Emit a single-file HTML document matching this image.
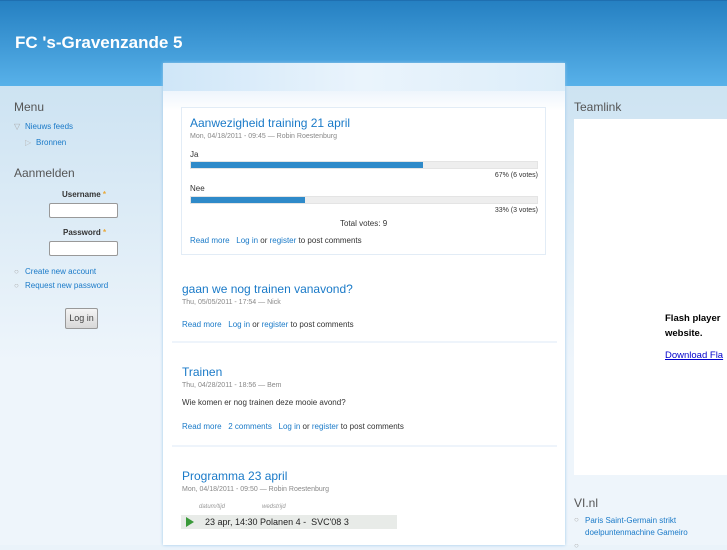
<!DOCTYPE html>
<html><head><meta charset="utf-8"><style>
*{margin:0;padding:0;box-sizing:border-box}
body{width:727px;height:545px;overflow:hidden;font-family:"Liberation Sans",sans-serif;background:#eaf3fa;position:relative;font-size:8px;color:#333}
a{color:#1a7ac8;text-decoration:none}
#hdr{position:absolute;left:0;top:0;width:727px;height:86px;background:linear-gradient(#2580c2,#58b1e9);border-top:1px solid #1f6fb0}
#hdr h1{position:absolute;left:15px;top:32px;color:#fff;font-size:17px;font-weight:bold}
.side{position:absolute;top:86px;height:459px;background:linear-gradient(#cde3f2,#eef5fb 60%,#eef5fb)}
#left{left:0;width:163px}
#right{left:565px;width:162px}
#center{position:absolute;left:163px;top:63px;width:402px;height:482px;background:#fff;box-shadow:0 0 3px #9cc8ea}
#center .top{height:28px;background:linear-gradient(90deg,#cfe6f8,#eaf4fc 50%,#dcedf9)}
#center .top2{height:20px;background:linear-gradient(#eef5fc,#fff)}
h2{font-weight:normal;font-size:12px;color:#555}
.t{position:absolute;font-size:8px;white-space:nowrap}
.post h3{font-weight:normal;font-size:12px;color:#1a7ac8}
.meta{color:#888;font-size:7px}
.bar{position:absolute;left:190px;width:348px;height:8px;background:#eee;border:1px solid #e4e4e4}
.bar div{height:6px;background:#2f8ac9}
input{position:absolute;width:69px;height:15px;border:1px solid #999;border-radius:2px;background:#fff}
</style></head><body>
<div id="hdr"><h1>FC 's-Gravenzande 5</h1></div>
<div class="side" id="left"></div>
<div class="side" id="right"></div>
<div id="center"><div class="top"></div><div class="top2"></div></div>

<h2 style="position:absolute;left:14px;top:100px">Menu</h2>
<div class="t" style="left:14px;top:122px;color:#aaa">▽</div>
<a class="t" style="left:25px;top:122px">Nieuws feeds</a>
<div class="t" style="left:25px;top:138px;color:#bbb">▷</div>
<a class="t" style="left:36px;top:138px">Bronnen</a>
<h2 style="position:absolute;left:14px;top:166px">Aanmelden</h2>
<div class="t" style="left:62px;top:190px;font-weight:bold">Username <span style="color:#e9a93b">*</span></div>
<input style="left:49px;top:203px">
<div class="t" style="left:63px;top:228px;font-weight:bold">Password <span style="color:#e9a93b">*</span></div>
<input style="left:49px;top:241px">
<div class="t" style="left:14px;top:267px;color:#aaa">○</div>
<a class="t" style="left:25px;top:267px">Create new account</a>
<div class="t" style="left:14px;top:281px;color:#aaa">○</div>
<a class="t" style="left:25px;top:281px">Request new password</a>
<div style="position:absolute;left:65px;top:308px;width:33px;height:21px;border:1px solid #999;border-radius:2px;background:linear-gradient(#f4f4f4,#d8d8d8);font-size:9px;color:#444;text-align:center;line-height:19px">Log in</div>

<div style="position:absolute;left:181px;top:107px;width:365px;height:148px;background:#fff;border:1px solid #e2ecf6"></div>
<div class="post" style="position:absolute;left:190px;top:116px;width:348px">
<h3>Aanwezigheid training 21 april</h3>
</div>
<div class="t meta" style="left:190px;top:133px">Mon, 04/18/2011 - 09:45 — Robin Roestenburg</div>
<div class="t" style="left:190px;top:150px">Ja</div>
<div class="bar" style="top:161px"><div style="width:67%"></div></div>
<div class="t" style="right:189px;top:172px;font-size:7px">67% (6 votes)</div>
<div class="t" style="left:190px;top:184px">Nee</div>
<div class="bar" style="top:196px"><div style="width:33%"></div></div>
<div class="t" style="right:189px;top:207px;font-size:7px">33% (3 votes)</div>
<div class="t" style="left:340px;top:219px">Total votes: 9</div>
<div class="t" style="left:190px;top:236px"><a>Read more</a> &nbsp; <a>Log in</a> or <a>register</a> to post comments</div>

<div class="post" style="position:absolute;left:182px;top:282px;width:370px">
<h3>gaan we nog trainen vanavond?</h3>
<div class="meta" style="margin-top:3px">Thu, 05/05/2011 - 17:54 — Nick</div>
<div style="margin-top:14px"><a>Read more</a> &nbsp; <a>Log in</a> or <a>register</a> to post comments</div>
</div>
<div style="position:absolute;left:172px;top:445px;width:385px;height:2px;background:#eef4fb"></div>
<div style="position:absolute;left:172px;top:341px;width:385px;height:2px;background:#eef4fb"></div>
<div class="post" style="position:absolute;left:182px;top:365px;width:370px">
<h3>Trainen</h3>
<div class="meta" style="margin-top:3px">Thu, 04/28/2011 - 18:56 — Bem</div>
<div style="margin-top:9px">Wie komen er nog trainen deze mooie avond?</div>
<div style="margin-top:15px"><a>Read more</a> &nbsp; <a>2 comments</a> &nbsp; <a>Log in</a> or <a>register</a> to post comments</div>
</div>
<div class="post" style="position:absolute;left:182px;top:469px;width:370px">
<h3>Programma 23 april</h3>
<div class="meta" style="margin-top:3px">Mon, 04/18/2011 - 09:50 — Robin Roestenburg</div>
</div>
<div class="t" style="left:199px;top:504px;color:#999;font-style:italic;font-size:6px">datum/tijd</div>
<div class="t" style="left:262px;top:504px;color:#999;font-style:italic;font-size:6px">wedstrijd</div>
<div style="position:absolute;left:181px;top:515px;width:216px;height:14px;background:#e8ebe8;font-size:9px;line-height:14px;color:#222;padding-left:24px">23 apr, 14:30 Polanen 4 -&nbsp; SVC'08 3</div>
<div style="position:absolute;left:186px;top:517px;width:0;height:0;border-left:8px solid #3a9a3a;border-top:5px solid transparent;border-bottom:5px solid transparent"></div>

<h2 style="position:absolute;left:574px;top:100px">Teamlink</h2>
<div style="position:absolute;left:574px;top:119px;width:153px;height:356px;background:#fff"></div>
<div class="t" style="left:665px;top:311px;font-size:9.5px;font-weight:bold;color:#000;line-height:15px">Flash player<br>website.</div>
<a class="t" style="left:665px;top:350px;font-size:9.5px;color:#00c;text-decoration:underline">Download Fla</a>
<h2 style="position:absolute;left:574px;top:496px">VI.nl</h2>
<div class="t" style="left:574px;top:515px;color:#aaa">○</div>
<a class="t" style="left:585px;top:515px;line-height:12px">Paris Saint-Germain strikt<br>doelpuntenmachine Gameiro</a>
<div class="t" style="left:574px;top:541px;color:#aaa">○</div>
</body></html>
